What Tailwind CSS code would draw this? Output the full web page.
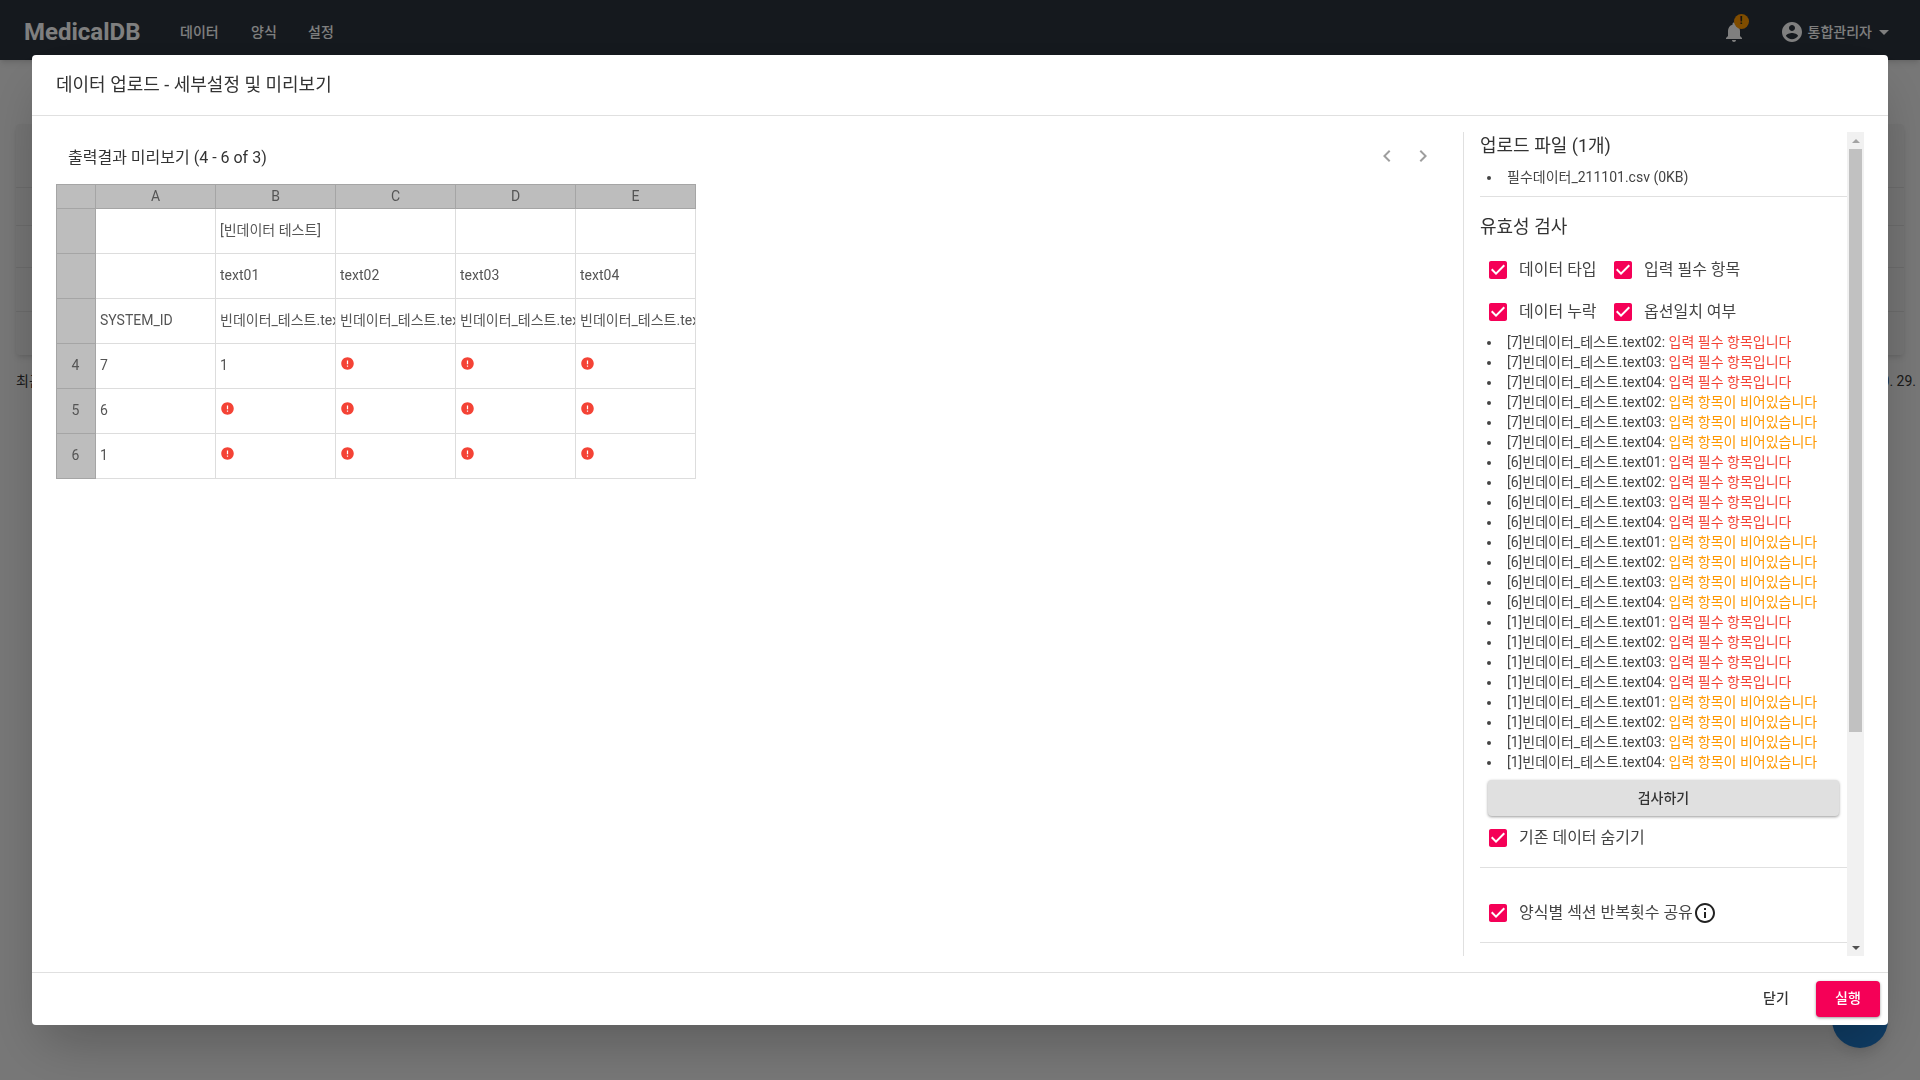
<!DOCTYPE html>
<html lang="ko">
<head>
  <meta charset="UTF-8">
  <title>MedicalDB</title>
  <script src="https://cdn.jsdelivr.net/npm/@tailwindcss/browser@4"></script>
</head>
<body class="bg-[#eeeeee] text-[#333] font-['Roboto','Noto_Sans_CJK_KR',sans-serif]">
  <div class="h-[1080px] w-[1920px] overflow-hidden">
    <!-- Navbar -->
    <nav class="h-[60px] bg-[#2a323c] flex items-center pl-6 pr-[31px] pt-1 text-white shadow-md">
      <span class="text-2xl font-bold w-[156px]">MedicalDB</span>
      <a class="text-sm font-medium w-[71px]">데이터</a>
      <a class="text-sm font-medium w-[57px]">양식</a>
      <a class="text-sm font-medium">설정</a>
      <div class="ml-auto relative mr-[34px]">
        <svg class="w-6 h-6 fill-white" viewBox="0 0 24 24"><path d="M12 22c1.1 0 2-.9 2-2h-4c0 1.1.89 2 2 2zm6-6v-5c0-3.07-1.64-5.64-4.5-6.32V4c0-.83-.67-1.5-1.5-1.5s-1.5.67-1.5 1.5v.68C7.63 5.36 6 7.92 6 11v5l-2 2v1h16v-1l-2-2z"/></svg>
        <span class="absolute -top-[6px] left-[12px] w-[15px] h-[15px] rounded-full bg-[#ff9800] text-[#222] text-[11px] font-bold flex items-center justify-center">!</span>
      </div>
      <svg class="w-6 h-6 fill-white mr-1" viewBox="0 0 24 24"><path d="M12 2C6.48 2 2 6.48 2 12s4.48 10 10 10 10-4.48 10-10S17.52 2 12 2zm0 3c1.66 0 3 1.34 3 3s-1.34 3-3 3-3-1.34-3-3 1.34-3 3-3zm0 14.2c-2.5 0-4.71-1.28-6-3.22.03-1.99 4-3.08 6-3.08 1.99 0 5.97 1.09 6 3.08-1.29 1.94-3.5 3.22-6 3.22z"/></svg>
      <span class="text-sm font-medium">통합관리자</span>
      <span class="ml-[7px] w-0 h-0 border-x-[5px] border-x-transparent border-t-[5px] border-t-white"></span>
    </nav>

    <!-- Page behind the dialog -->
    <main class="pt-16 pl-4 pr-1">
      <div class="w-[1888px] h-[231px] bg-[#e6e6e6] rounded shadow-md flex flex-col">
        <div class="h-16 border-b border-[#d4d4d4]"></div>
        <div class="h-[38px] border-b border-[#d4d4d4]"></div>
        <div class="h-[42px] border-b border-[#d4d4d4]"></div>
        <div class="h-11 border-b border-[#d4d4d4]"></div>
      </div>
      <div class="flex justify-between mt-4 text-sm text-[#333]">
        <span>최근 수정일</span>
        <span>2021. 10. 29.</span>
      </div>
    </main>
    <div class="fixed left-[1832px] top-[992px] w-14 h-14 rounded-full bg-[#1e78c8] shadow-lg"></div>
  </div>

  <!-- Backdrop -->
  <div class="fixed inset-0 bg-black/50"></div>

  <!-- Dialog -->
  <div class="fixed left-8 top-[55px] w-[1856px] h-[970px] bg-white rounded shadow-2xl flex flex-col">
    <header class="h-[61px] shrink-0 border-b border-[#e0e0e0] pl-6 flex items-center">
      <h2 class="text-lg text-[#333]">데이터 업로드 - 세부설정 및 미리보기</h2>
    </header>

    <div class="flex-1 flex pt-4 min-h-0 pb-4">
      <!-- Preview -->
      <section class="w-[1431px] shrink-0 pl-6 pr-[22px]">
        <div class="h-[52px] flex items-center pl-3">
          <span class="text-base text-[#333]">출력결과 미리보기 (4 - 6 of 3)</span>
          <svg class="ml-auto w-6 h-6 fill-[#9e9e9e] -mt-1" viewBox="0 0 24 24"><path d="M15.41 7.41L14 6l-6 6 6 6 1.41-1.41L10.83 12z"/></svg>
          <svg class="ml-3 mr-[6px] w-6 h-6 fill-[#9e9e9e] -mt-1" viewBox="0 0 24 24"><path d="M10 6L8.59 7.41 13.17 12l-4.58 4.59L10 18l6-6z"/></svg>
        </div>
        <table class="table-fixed border-collapse w-[639px] text-sm text-[#555] [&_td]:pb-[2px] [&_th]:pb-[2px] [&_tbody_th]:pr-px">
          <colgroup><col class="w-[39px]"><col class="w-[120px]"><col class="w-[120px]"><col class="w-[120px]"><col class="w-[120px]"><col class="w-[120px]"></colgroup>
          <thead>
            <tr class="h-6 bg-[#bdbdbd]">
              <th class="border border-[#a5a5a5] font-normal"></th>
              <th class="border border-[#a5a5a5] font-normal">A</th>
              <th class="border border-[#a5a5a5] font-normal">B</th>
              <th class="border border-[#a5a5a5] font-normal">C</th>
              <th class="border border-[#a5a5a5] font-normal">D</th>
              <th class="border border-[#a5a5a5] font-normal">E</th>
            </tr>
          </thead>
          <tbody>
            <tr class="h-[45px]">
              <th class="bg-[#bdbdbd] border border-[#a5a5a5] font-normal"></th>
              <td class="border border-[#ddd] px-1"></td>
              <td class="border border-[#ddd] px-1 whitespace-nowrap overflow-hidden">[빈데이터 테스트]</td>
              <td class="border border-[#ddd] px-1"></td>
              <td class="border border-[#ddd] px-1"></td>
              <td class="border border-[#ddd] px-1"></td>
            </tr>
            <tr class="h-[45px]">
              <th class="bg-[#bdbdbd] border border-[#a5a5a5] font-normal"></th>
              <td class="border border-[#ddd] px-1"></td>
              <td class="border border-[#ddd] px-1">text01</td>
              <td class="border border-[#ddd] px-1">text02</td>
              <td class="border border-[#ddd] px-1">text03</td>
              <td class="border border-[#ddd] px-1">text04</td>
            </tr>
            <tr class="h-[45px]">
              <th class="bg-[#bdbdbd] border border-[#a5a5a5] font-normal"></th>
              <td class="border border-[#ddd] px-1 whitespace-nowrap overflow-hidden">SYSTEM_ID</td>
              <td class="border border-[#ddd] px-1 whitespace-nowrap overflow-hidden">빈데이터_테스트.text01</td>
              <td class="border border-[#ddd] px-1 whitespace-nowrap overflow-hidden">빈데이터_테스트.text02</td>
              <td class="border border-[#ddd] px-1 whitespace-nowrap overflow-hidden">빈데이터_테스트.text03</td>
              <td class="border border-[#ddd] px-1 whitespace-nowrap overflow-hidden">빈데이터_테스트.text04</td>
            </tr>
            <tr class="h-[45px]">
              <th class="bg-[#bdbdbd] border border-[#a5a5a5] font-normal">4</th>
              <td class="border border-[#ddd] px-1">7</td>
              <td class="border border-[#ddd] px-1">1</td>
              <td class="border border-[#ddd] px-1"><svg class="w-[15px] h-[15px] fill-[#f44336] -mt-1" viewBox="0 0 24 24"><path d="M12 2C6.48 2 2 6.48 2 12s4.48 10 10 10 10-4.48 10-10S17.52 2 12 2zm1 15h-2v-2h2v2zm0-4h-2V7h2v6z"/></svg></td>
              <td class="border border-[#ddd] px-1"><svg class="w-[15px] h-[15px] fill-[#f44336] -mt-1" viewBox="0 0 24 24"><path d="M12 2C6.48 2 2 6.48 2 12s4.48 10 10 10 10-4.48 10-10S17.52 2 12 2zm1 15h-2v-2h2v2zm0-4h-2V7h2v6z"/></svg></td>
              <td class="border border-[#ddd] px-1"><svg class="w-[15px] h-[15px] fill-[#f44336] -mt-1" viewBox="0 0 24 24"><path d="M12 2C6.48 2 2 6.48 2 12s4.48 10 10 10 10-4.48 10-10S17.52 2 12 2zm1 15h-2v-2h2v2zm0-4h-2V7h2v6z"/></svg></td>
            </tr>
            <tr class="h-[45px]">
              <th class="bg-[#bdbdbd] border border-[#a5a5a5] font-normal">5</th>
              <td class="border border-[#ddd] px-1">6</td>
              <td class="border border-[#ddd] px-1"><svg class="w-[15px] h-[15px] fill-[#f44336] -mt-1" viewBox="0 0 24 24"><path d="M12 2C6.48 2 2 6.48 2 12s4.48 10 10 10 10-4.48 10-10S17.52 2 12 2zm1 15h-2v-2h2v2zm0-4h-2V7h2v6z"/></svg></td>
              <td class="border border-[#ddd] px-1"><svg class="w-[15px] h-[15px] fill-[#f44336] -mt-1" viewBox="0 0 24 24"><path d="M12 2C6.48 2 2 6.48 2 12s4.48 10 10 10 10-4.48 10-10S17.52 2 12 2zm1 15h-2v-2h2v2zm0-4h-2V7h2v6z"/></svg></td>
              <td class="border border-[#ddd] px-1"><svg class="w-[15px] h-[15px] fill-[#f44336] -mt-1" viewBox="0 0 24 24"><path d="M12 2C6.48 2 2 6.48 2 12s4.48 10 10 10 10-4.48 10-10S17.52 2 12 2zm1 15h-2v-2h2v2zm0-4h-2V7h2v6z"/></svg></td>
              <td class="border border-[#ddd] px-1"><svg class="w-[15px] h-[15px] fill-[#f44336] -mt-1" viewBox="0 0 24 24"><path d="M12 2C6.48 2 2 6.48 2 12s4.48 10 10 10 10-4.48 10-10S17.52 2 12 2zm1 15h-2v-2h2v2zm0-4h-2V7h2v6z"/></svg></td>
            </tr>
            <tr class="h-[45px]">
              <th class="bg-[#bdbdbd] border border-[#a5a5a5] font-normal">6</th>
              <td class="border border-[#ddd] px-1">1</td>
              <td class="border border-[#ddd] px-1"><svg class="w-[15px] h-[15px] fill-[#f44336] -mt-1" viewBox="0 0 24 24"><path d="M12 2C6.48 2 2 6.48 2 12s4.48 10 10 10 10-4.48 10-10S17.52 2 12 2zm1 15h-2v-2h2v2zm0-4h-2V7h2v6z"/></svg></td>
              <td class="border border-[#ddd] px-1"><svg class="w-[15px] h-[15px] fill-[#f44336] -mt-1" viewBox="0 0 24 24"><path d="M12 2C6.48 2 2 6.48 2 12s4.48 10 10 10 10-4.48 10-10S17.52 2 12 2zm1 15h-2v-2h2v2zm0-4h-2V7h2v6z"/></svg></td>
              <td class="border border-[#ddd] px-1"><svg class="w-[15px] h-[15px] fill-[#f44336] -mt-1" viewBox="0 0 24 24"><path d="M12 2C6.48 2 2 6.48 2 12s4.48 10 10 10 10-4.48 10-10S17.52 2 12 2zm1 15h-2v-2h2v2zm0-4h-2V7h2v6z"/></svg></td>
              <td class="border border-[#ddd] px-1"><svg class="w-[15px] h-[15px] fill-[#f44336] -mt-1" viewBox="0 0 24 24"><path d="M12 2C6.48 2 2 6.48 2 12s4.48 10 10 10 10-4.48 10-10S17.52 2 12 2zm1 15h-2v-2h2v2zm0-4h-2V7h2v6z"/></svg></td>
            </tr>
          </tbody>
        </table>
      </section>

      <!-- Settings panel -->
      <aside class="w-[401px] shrink-0 border-l border-[#e0e0e0] flex min-h-0">
        <div class="w-[367px] ml-4 overflow-hidden">
          <h3 class="text-lg leading-[26px] mt-px">업로드 파일 (1개)</h3>
          <ul class="list-disc pl-[22px] mt-2 text-sm leading-5 text-[#444] [&>li]:pl-[5px]">
            <li>필수데이터_211101.csv (0KB)</li>
          </ul>
          <hr class="mt-[9px] border-[#e0e0e0]">
          <h3 class="text-lg leading-[26px] mt-[17px]">유효성 검사</h3>
          <div class="mt-[9px] pl-[6px] flex items-center h-[42px]">
            <svg class="w-6 h-6 fill-[#f50057]" viewBox="0 0 24 24"><path d="M19 3H5c-1.11 0-2 .9-2 2v14c0 1.1.89 2 2 2h14c1.1 0 2-.9 2-2V5c0-1.1-.89-2-2-2zm-9 14l-5-5 1.41-1.41L10 14.17l7.59-7.59L19 8l-9 9z"/></svg>
            <span class="ml-[9px] w-[92px] text-base text-[#444] whitespace-nowrap">데이터 타입</span>
            <svg class="w-6 h-6 fill-[#f50057]" viewBox="0 0 24 24"><path d="M19 3H5c-1.11 0-2 .9-2 2v14c0 1.1.89 2 2 2h14c1.1 0 2-.9 2-2V5c0-1.1-.89-2-2-2zm-9 14l-5-5 1.41-1.41L10 14.17l7.59-7.59L19 8l-9 9z"/></svg>
            <span class="ml-[9px] text-base text-[#444]">입력 필수 항목</span>
          </div>
          <div class="pl-[6px] flex items-center h-[42px]">
            <svg class="w-6 h-6 fill-[#f50057]" viewBox="0 0 24 24"><path d="M19 3H5c-1.11 0-2 .9-2 2v14c0 1.1.89 2 2 2h14c1.1 0 2-.9 2-2V5c0-1.1-.89-2-2-2zm-9 14l-5-5 1.41-1.41L10 14.17l7.59-7.59L19 8l-9 9z"/></svg>
            <span class="ml-[9px] w-[92px] text-base text-[#444] whitespace-nowrap">데이터 누락</span>
            <svg class="w-6 h-6 fill-[#f50057]" viewBox="0 0 24 24"><path d="M19 3H5c-1.11 0-2 .9-2 2v14c0 1.1.89 2 2 2h14c1.1 0 2-.9 2-2V5c0-1.1-.89-2-2-2zm-9 14l-5-5 1.41-1.41L10 14.17l7.59-7.59L19 8l-9 9z"/></svg>
            <span class="ml-[9px] text-base text-[#444]">옵션일치 여부</span>
          </div>
          <ul class="list-disc -mt-px pl-[22px] text-sm leading-5 text-[#444] [&>li]:pl-[5px]">
            <li>[7]빈데이터_테스트.text02: <span class="text-[#f44336]">입력 필수 항목입니다</span></li>
            <li>[7]빈데이터_테스트.text03: <span class="text-[#f44336]">입력 필수 항목입니다</span></li>
            <li>[7]빈데이터_테스트.text04: <span class="text-[#f44336]">입력 필수 항목입니다</span></li>
            <li>[7]빈데이터_테스트.text02: <span class="text-[#ff9800]">입력 항목이 비어있습니다</span></li>
            <li>[7]빈데이터_테스트.text03: <span class="text-[#ff9800]">입력 항목이 비어있습니다</span></li>
            <li>[7]빈데이터_테스트.text04: <span class="text-[#ff9800]">입력 항목이 비어있습니다</span></li>
            <li>[6]빈데이터_테스트.text01: <span class="text-[#f44336]">입력 필수 항목입니다</span></li>
            <li>[6]빈데이터_테스트.text02: <span class="text-[#f44336]">입력 필수 항목입니다</span></li>
            <li>[6]빈데이터_테스트.text03: <span class="text-[#f44336]">입력 필수 항목입니다</span></li>
            <li>[6]빈데이터_테스트.text04: <span class="text-[#f44336]">입력 필수 항목입니다</span></li>
            <li>[6]빈데이터_테스트.text01: <span class="text-[#ff9800]">입력 항목이 비어있습니다</span></li>
            <li>[6]빈데이터_테스트.text02: <span class="text-[#ff9800]">입력 항목이 비어있습니다</span></li>
            <li>[6]빈데이터_테스트.text03: <span class="text-[#ff9800]">입력 항목이 비어있습니다</span></li>
            <li>[6]빈데이터_테스트.text04: <span class="text-[#ff9800]">입력 항목이 비어있습니다</span></li>
            <li>[1]빈데이터_테스트.text01: <span class="text-[#f44336]">입력 필수 항목입니다</span></li>
            <li>[1]빈데이터_테스트.text02: <span class="text-[#f44336]">입력 필수 항목입니다</span></li>
            <li>[1]빈데이터_테스트.text03: <span class="text-[#f44336]">입력 필수 항목입니다</span></li>
            <li>[1]빈데이터_테스트.text04: <span class="text-[#f44336]">입력 필수 항목입니다</span></li>
            <li>[1]빈데이터_테스트.text01: <span class="text-[#ff9800]">입력 항목이 비어있습니다</span></li>
            <li>[1]빈데이터_테스트.text02: <span class="text-[#ff9800]">입력 항목이 비어있습니다</span></li>
            <li>[1]빈데이터_테스트.text03: <span class="text-[#ff9800]">입력 항목이 비어있습니다</span></li>
            <li>[1]빈데이터_테스트.text04: <span class="text-[#ff9800]">입력 항목이 비어있습니다</span></li>
          </ul>
          <button class="block ml-2 mt-2 w-[351px] h-9 rounded bg-[#e0e0e0] text-sm font-medium text-[#333] shadow-[0_1px_3px_rgba(0,0,0,0.4)]">검사하기</button>
          <div class="pl-[6px] flex items-center h-[42px] mt-px">
            <svg class="w-6 h-6 fill-[#f50057]" viewBox="0 0 24 24"><path d="M19 3H5c-1.11 0-2 .9-2 2v14c0 1.1.89 2 2 2h14c1.1 0 2-.9 2-2V5c0-1.1-.89-2-2-2zm-9 14l-5-5 1.41-1.41L10 14.17l7.59-7.59L19 8l-9 9z"/></svg>
            <span class="ml-[9px] text-base text-[#444]">기존 데이터 숨기기</span>
          </div>
          <hr class="mt-2 border-[#e0e0e0]">
          <div class="pl-[6px] flex items-center h-[42px] mt-6">
            <svg class="w-6 h-6 fill-[#f50057]" viewBox="0 0 24 24"><path d="M19 3H5c-1.11 0-2 .9-2 2v14c0 1.1.89 2 2 2h14c1.1 0 2-.9 2-2V5c0-1.1-.89-2-2-2zm-9 14l-5-5 1.41-1.41L10 14.17l7.59-7.59L19 8l-9 9z"/></svg>
            <span class="ml-[9px] text-base text-[#444]">양식별 섹션 반복횟수 공유</span>
            <svg class="w-6 h-6 fill-[#222]" viewBox="0 0 24 24"><path d="M11 7h2v2h-2zm0 4h2v6h-2zm1-9C6.48 2 2 6.48 2 12s4.48 10 10 10 10-4.48 10-10S17.52 2 12 2zm0 18c-4.41 0-8-3.59-8-8s3.59-8 8-8 8 3.59 8 8-3.59 8-8 8z"/></svg>
          </div>
          <hr class="mt-2 border-[#e0e0e0]">
        </div>
        <!-- Scrollbar -->
        <div class="w-[17px] shrink-0 bg-[#f1f1f1] flex flex-col items-center">
          <div class="h-[17px] flex items-center justify-center"><span class="w-0 h-0 border-x-[4px] border-x-transparent border-b-[4px] border-b-[#a3a3a3]"></span></div>
          <div class="w-[13px] h-[583px] bg-[#c1c1c1]"></div>
          <div class="mt-auto h-[17px] flex items-center justify-center"><span class="w-0 h-0 border-x-[4px] border-x-transparent border-t-[4px] border-t-[#505050]"></span></div>
        </div>
      </aside>
    </div>

    <footer class="h-[53px] shrink-0 border-t border-[#e0e0e0] flex items-center justify-end pr-2">
      <button class="w-16 h-9 pb-[2px] text-sm font-medium text-[#333] rounded mr-2">닫기</button>
      <button class="w-16 h-9 pb-[2px] text-sm font-medium text-white rounded bg-[#f50057] shadow-[0_1px_3px_rgba(0,0,0,0.4)]">실행</button>
    </footer>
  </div>
</body>
</html>
